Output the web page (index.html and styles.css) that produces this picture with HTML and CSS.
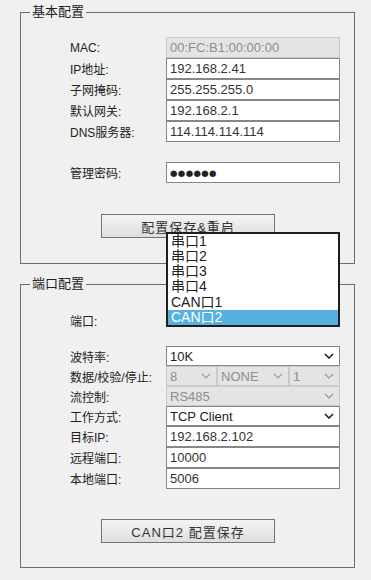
FILE: index.html
```html
<!DOCTYPE html>
<html lang="zh">
<head>
    <meta charset="UTF-8">
    <title>网络配置</title>
    <link rel="stylesheet" href="styles.css">
</head>
<body>
    <fieldset class="panel panel-basic">
        <legend>基本配置</legend>
        <div class="form">
            <label>MAC:</label>
            <input class="field" type="text" value="00:FC:B1:00:00:00" disabled>
            <label>IP地址:</label>
            <input class="field" type="text" value="192.168.2.41">
            <label>子网掩码:</label>
            <input class="field" type="text" value="255.255.255.0">
            <label>默认网关:</label>
            <input class="field" type="text" value="192.168.2.1">
            <label>DNS服务器:</label>
            <input class="field" type="text" value="114.114.114.114">
        </div>
        <div class="form form-gap">
            <label>管理密码:</label>
            <div class="field dots">●●●●●●</div>
        </div>
        <div class="actions">
            <button class="btn">配置保存&amp;重启</button>
        </div>
    </fieldset>

    <fieldset class="panel panel-port">
        <legend>端口配置</legend>
        <div class="form">
            <label>端口:</label>
            <div class="select port-select">
                <!-- opened list covers the closed select -->
                <ul class="popup">
                    <li>串口1</li>
                    <li>串口2</li>
                    <li>串口3</li>
                    <li>串口4</li>
                    <li>CAN口1</li>
                    <li class="active">CAN口2</li>
                </ul>
            </div>
        </div>
        <div class="form form-gap-sm">
            <label>波特率:</label>
            <div class="select"><span>10K</span><svg viewBox="0 0 10 6"><polyline points="1,1 5,5 9,1"/></svg></div>
            <label>数据/校验/停止:</label>
            <div class="triple">
                <div class="select disabled"><span>8</span><svg viewBox="0 0 10 6"><polyline points="1,1 5,5 9,1"/></svg></div>
                <div class="select disabled"><span>NONE</span><svg viewBox="0 0 10 6"><polyline points="1,1 5,5 9,1"/></svg></div>
                <div class="select disabled"><span>1</span><svg viewBox="0 0 10 6"><polyline points="1,1 5,5 9,1"/></svg></div>
            </div>
            <label>流控制:</label>
            <div class="select disabled"><span>RS485</span><svg viewBox="0 0 10 6"><polyline points="1,1 5,5 9,1"/></svg></div>
            <label>工作方式:</label>
            <div class="select"><span>TCP Client</span><svg viewBox="0 0 10 6"><polyline points="1,1 5,5 9,1"/></svg></div>
            <label>目标IP:</label>
            <input class="field" type="text" value="192.168.2.102">
            <label>远程端口:</label>
            <input class="field" type="text" value="10000">
            <label>本地端口:</label>
            <input class="field" type="text" value="5006">
        </div>
        <div class="actions actions-port">
            <button class="btn">CAN口2 配置保存</button>
        </div>
    </fieldset>
</body>
</html>
```

FILE: styles.css
```css
body {
    margin: 0;
    background: #f0f0f0;
    font-family: 'Liberation Sans', 'Noto Sans CJK SC', sans-serif;
    color: #222;
}

.panel {
    width: 335px;
    box-sizing: border-box;
    margin: 4px 0 0 20px;
    padding: 0;
    border: 1px solid #6e6e6e;
}

.panel-port {
    margin-top: 12px;
}

.panel legend {
    margin-left: 9px;
    padding: 0 2px;
    font-size: 13px;
    line-height: 16px;
    color: #222;
}

.panel-basic .form:first-of-type {
    padding-top: 17px;
}

.panel-port .form:first-of-type {
    padding-top: 18px;
}

.form {
    display: grid;
    grid-template-columns: 96px 174px;
    padding-left: 49px;
}

.form-gap {
    margin-top: 20px;
}

.form-gap-sm {
    margin-top: 15px;
}

.form label {
    display: flex;
    align-items: center;
    font-size: 12px;
    color: #222;
}

.field {
    box-sizing: border-box;
    height: 21px;
    margin: 0;
    padding: 0 3px;
    border: 1px solid #868686;
    background: #fff;
    font-family: 'Liberation Sans', sans-serif;
    font-size: 13px;
    color: #333;
    outline: none;
}

.field:disabled {
    background: #e4e4e4;
    border-color: #cbcbcb;
    color: #8e8e8e;
}

.dots {
    display: flex;
    align-items: center;
    font-family: 'DejaVu Sans', sans-serif;
    font-size: 8.5px;
    letter-spacing: 0.4px;
    color: #222;
}

.select {
    position: relative;
    box-sizing: border-box;
    height: 20px;
    display: flex;
    align-items: center;
    justify-content: space-between;
    padding: 0 5px 0 3px;
    border: 1px solid #868686;
    background: #fff;
    font-size: 13px;
    color: #222;
}

.select svg {
    width: 10px;
    height: 6px;
    fill: none;
    stroke: #222;
    stroke-width: 1.6;
}

.select.disabled {
    background: #e4e4e4;
    border-color: #cbcbcb;
    color: #8e8e8e;
}

.select.disabled svg {
    stroke: #9a9a9a;
    stroke-width: 1.2;
}

.triple {
    display: grid;
    grid-template-columns: 51px 72px 51px;
}

.port-select {
    height: 21px;
    border-color: transparent;
    background: transparent;
}

.popup {
    position: absolute;
    left: -1px;
    bottom: 3px;
    box-sizing: border-box;
    width: 174px;
    margin: 0;
    padding: 0;
    list-style: none;
    border: 2px solid #1e1e1e;
    background: #fff;
}

.popup li {
    height: 15.2px;
    line-height: 15px;
    padding-left: 3px;
    font-size: 14px;
    color: #222;
}

.popup li.active {
    background: #56b1e0;
    color: #fff;
}

.actions {
    padding: 31px 0 25px 80px;
}

.actions-port {
    padding-top: 30px;
    padding-bottom: 24px;
}

.btn {
    display: block;
    width: 174px;
    height: 24px;
    padding: 0;
    border: 1px solid #737373;
    background: linear-gradient(#f4f4f4, #dedede);
    font-family: 'Liberation Sans', 'Noto Sans CJK SC', sans-serif;
    font-size: 13px;
    letter-spacing: 1px;
    color: #333;
}
```
